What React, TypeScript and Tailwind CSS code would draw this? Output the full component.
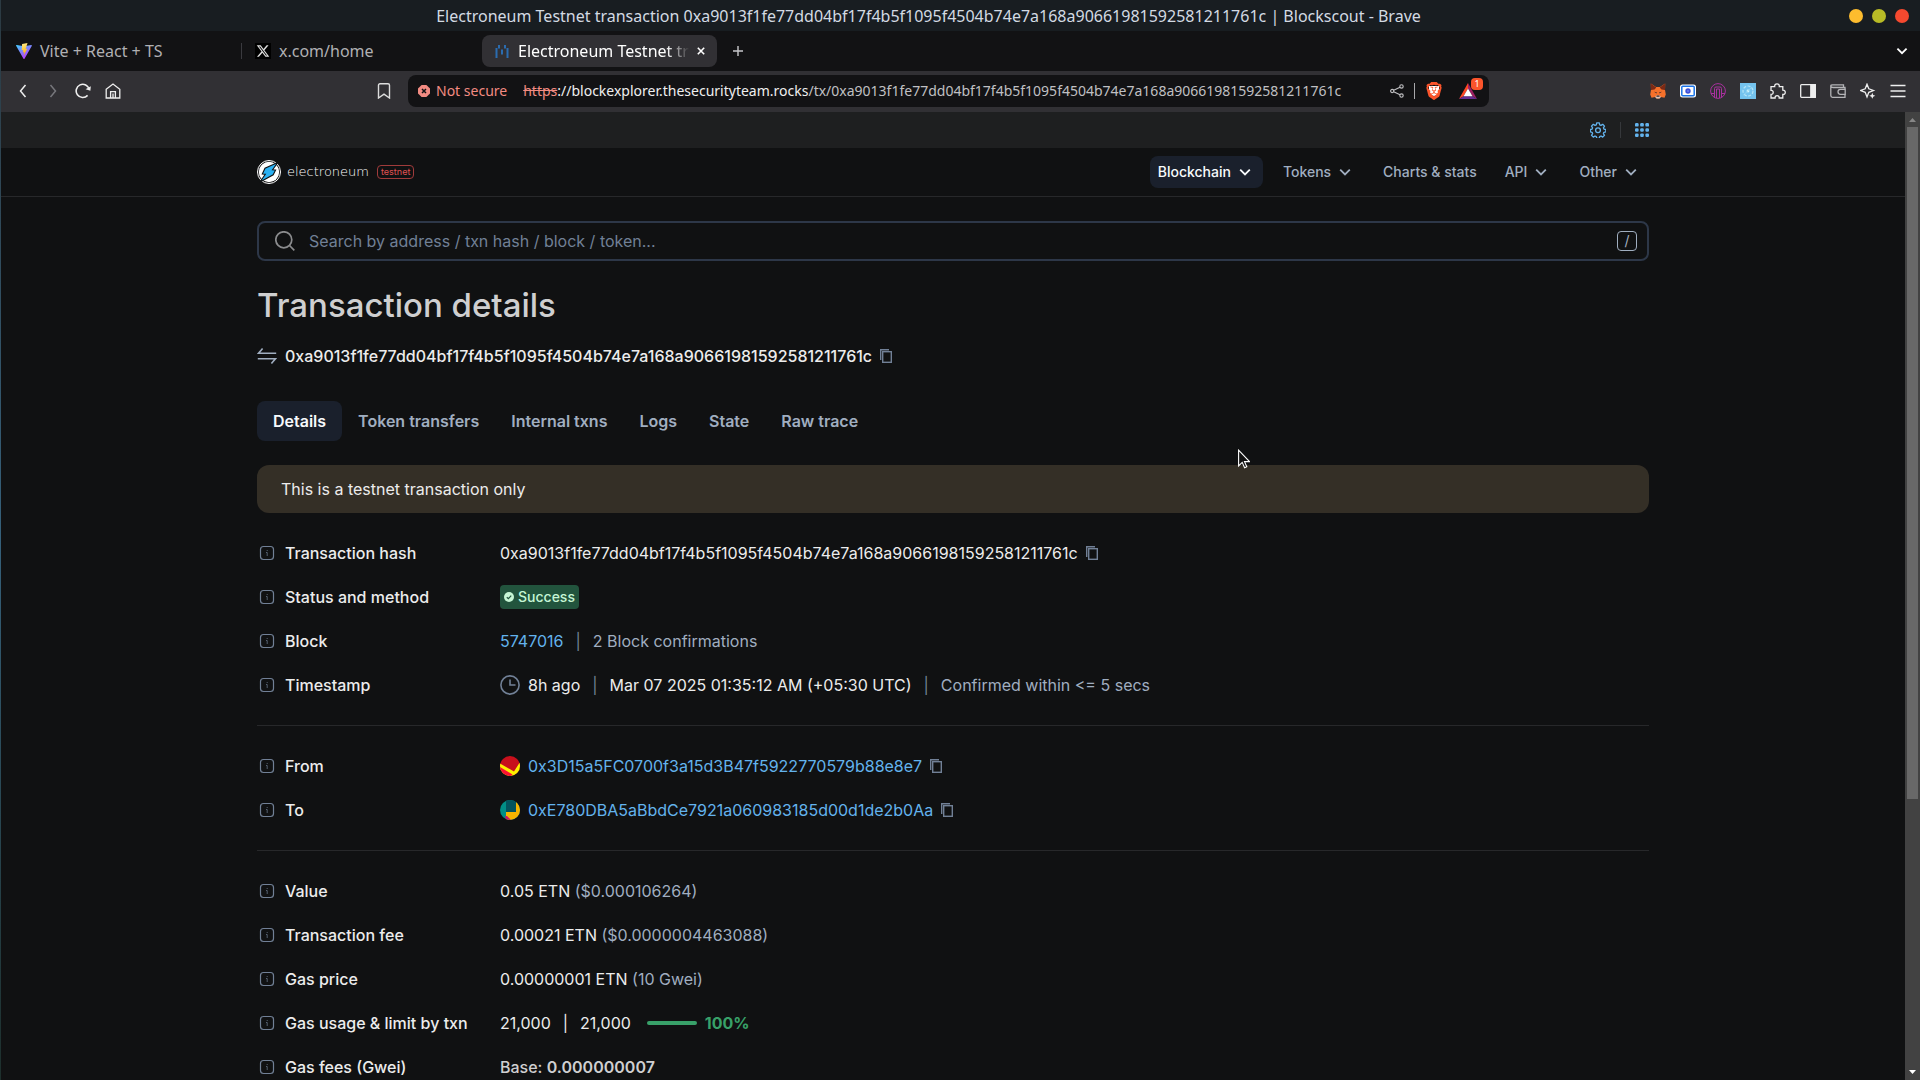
import { type ReactNode, useState } from 'react'
import { FaXTwitter } from 'react-icons/fa6'
import { SiBrave } from 'react-icons/si'

const TX_HASH = '0xa9013f1fe77dd04bf17f4b5f1095f4504b74e7a168a90661981592581211761c'

const NAV = [
    { label: 'Blockchain', menu: true, active: true },
    { label: 'Tokens', menu: true, active: false },
    { label: 'Charts & stats', menu: false, active: false },
    { label: 'API', menu: true, active: false },
    { label: 'Other', menu: true, active: false },
]

const TABS = ['Details', 'Token transfers', 'Internal txns', 'Logs', 'State', 'Raw trace']

export default function App() {
    return (
        <div className="flex h-screen overflow-hidden bg-[#101112] font-['Inter',sans-serif] text-[#ececec]">
            {/* strip of wallpaper beside the window */}
            <div className="w-px shrink-0 bg-linear-to-b from-[#2b3a42] via-[#35607a] to-[#1d2f2c]" />
            <div className="flex min-w-0 flex-1 flex-col">
                <TitleBar />
                <TabStrip />
                <Toolbar />
                <div className="flex min-h-0 flex-1">
                    <div className="min-w-0 flex-1 overflow-hidden">
                        <TopBar />
                        <Header />
                        <TransactionPage />
                    </div>
                    <ScrollBar />
                </div>
            </div>
            <Cursor />
        </div>
    )
}

const TitleBar = () => (
    <div className="relative flex h-[31px] shrink-0 items-center justify-end gap-[9px] bg-[#181d21] pr-[11px] font-['Noto_Sans',sans-serif]">
        <div className="absolute inset-x-0 text-center text-base text-[#d3dae3]">
            <span className="pr-16">Electroneum Testnet transaction {TX_HASH} | Blockscout - Brave</span>
        </div>
        <button aria-label="Minimize" className="relative size-3.5 rounded-full bg-[#fdbc2e]" />
        <button aria-label="Maximize" className="relative size-3.5 rounded-full bg-[#b8bb26]" />
        <button aria-label="Close" className="relative size-3.5 rounded-full bg-[#f5492f]" />
    </div>
)

const TabStrip = () => (
    <div className="flex h-10 shrink-0 items-center bg-[#121214] font-['Noto_Sans',sans-serif] text-base text-[#b0b0b3]">
        <button className="flex w-60 items-center gap-2 pl-[15px]">
            <ViteIcon />
            Vite + React + TS
        </button>
        <div className="h-4 w-px bg-[#3a3a3f]" />
        <button className="flex w-60 items-center gap-2 pl-[13px]">
            <span className="flex size-4 items-center justify-center bg-black">
                <FaXTwitter className="size-3.5 text-[#dddddd]" />
            </span>
            x.com/home
        </button>
        <div className="flex h-8 w-[235px] items-center rounded-lg bg-[#313034] pr-2 pl-3 text-white">
            <BlockscoutIcon />
            <button className="ml-2 min-w-0 flex-1 mask-r-from-85% mask-r-to-98% text-left whitespace-nowrap">
                Electroneum Testnet tr
            </button>
            <button aria-label="Close tab" className="flex size-4 items-center justify-center">
                <svg className="size-2" viewBox="0 0 8 8" stroke="#fff" strokeWidth="1.6"><path d="M.8.8l6.4 6.4M7.2.8L.8 7.2" /></svg>
            </button>
        </div>
        <button aria-label="New tab" className="ml-4">
            <svg className="size-2.5" viewBox="0 0 10 10" stroke="#c8c8cb" strokeWidth="1.4"><path d="M5 0v10M0 5h10" /></svg>
        </button>
        <button aria-label="Search tabs" className="mr-3 ml-auto">
            <svg className="h-3 w-3" viewBox="0 0 12 12" fill="none" stroke="#fff" strokeWidth="1.8"><path d="M1.4 3.6L6 8.2l4.6-4.6" /></svg>
        </button>
    </div>
)

const Toolbar = () => (
    <div className="flex h-[41px] shrink-0 items-center bg-[#313034] px-3.5 pb-px font-['Noto_Sans',sans-serif] text-sm">
        <div className="flex flex-1 items-center gap-3.5">
            <ToolButton label="Back"><path d="M10.5 2L5.5 8l5 6" strokeWidth="1.5" /></ToolButton>
            <ToolButton label="Forward"><path d="M5.5 2l5 6-5 6" stroke="#77777c" strokeWidth="1.5" /></ToolButton>
            <ToolButton label="Reload">
                <path d="M12.6 12.4A6.6 6.6 0 1 1 14.2 6.4" strokeWidth="1.6" />
                <path d="M10.6 6.2l4.8 1.6.4-4.6z" fill="#eee" stroke="none" />
            </ToolButton>
            <ToolButton label="Home">
                <path d="M1.2 6.2L8 1l6.800 5.200V15H1.200z" />
                <path d="M5.600 15V8.600h4.800V15M8 10.400V15" />
            </ToolButton>
            <button aria-label="Bookmark this tab" className="mr-4 ml-auto">
                <svg className="size-4" viewBox="0 0 16 16" fill="none" stroke="#ddd" strokeWidth="1.400"><path d="M2.500 2.200Q2.500.8 4 .8h8q1.500 0 1.500 1.400V15L8 11.200 2.500 15z" /></svg>
            </button>
        </div>
        <div className="flex h-8 min-w-0 shrink basis-[1081px] items-center rounded-lg bg-[#121214] pr-1.5 pl-2.5 whitespace-nowrap">
            <button className="flex items-center gap-1.5 text-[#f28b82]">
                <svg className="size-3" viewBox="0 0 12 12">
                    <path d="M3.600 0h4.800L12 3.600v4.800L8.400 12H3.600L0 8.400V3.600z" fill="#f28b82" />
                    <path d="M4 4l4 4M8 4L4 8" stroke="#121214" strokeWidth="1.500" />
                </svg>
                Not secure
            </button>
            <div className="ml-4 flex-1 text-[#c0c0c3]">
                <span className="text-[#f28b82] line-through">https</span>
                <span className="text-[#efefef]">://blockexplorer.thesecurityteam.rocks</span>
                /tx/{TX_HASH}
            </div>
            <button aria-label="Share">
                <svg className="size-3.5" viewBox="0 0 14 14" fill="none" stroke="#c0c0c3" strokeWidth="1.100">
                    <circle cx="2.200" cy="7" r="1.600" /><circle cx="11.500" cy="2.400" r="1.700" /><circle cx="11.500" cy="11.600" r="1.700" />
                    <path d="M3.700 6.300l6.300-3.100M3.700 7.700l6.300 3.100" />
                </svg>
            </button>
            <div className="mx-2.5 h-4 w-px bg-[#a8a8ab]" />
            <button aria-label="Brave Shields" className="flex size-[18px] items-center justify-center">
                <BraveShield />
            </button>
            <button aria-label="Brave Rewards" className="relative ml-4 flex h-[18px] w-6 items-center">
                <svg className="h-4 w-[18px]" viewBox="0 0 18 16">
                    <path d="M9 0L0 16l4.500-2.800L9 5.500z" fill="#ff4724" />
                    <path d="M9 0l9 16-4.500-2.800L9 5.500z" fill="#9e1f63" />
                    <path d="M0 16h18l-4.500-2.800h-9z" fill="#662d91" />
                    <path d="M9 5.500l4.500 7.700h-9z" fill="#fff" />
                </svg>
                <span className="absolute -top-1 right-0 flex h-3 w-3 items-center justify-center rounded-sm bg-[#fb542b] text-[9px] text-white">1</span>
            </button>
        </div>
        <div className="flex flex-1 items-center justify-end gap-3.5 pl-6">
            <ToolButton label="MetaMask"><FoxArt /></ToolButton>
            <ToolButton label="Screen recorder">
                <rect x="0" y="1.500" width="16" height="13" rx="2.500" fill="#fff" stroke="none" />
                <rect x="1.800" y="3.200" width="12.400" height="9.600" rx="1" stroke="#1a73e8" strokeWidth="1.500" />
                <circle cx="8" cy="8" r="2.700" fill="#3f51d8" stroke="none" />
                <circle cx="8" cy="8" r=".8" fill="#8fa0ff" stroke="none" />
            </ToolButton>
            <ToolButton label="Wallet extension">
                <g stroke="#a9309f" strokeWidth="1">
                    <circle cx="8" cy="8" r="7.400" />
                    <path d="M4.500 14.500V5.500q0-1.500 1.500-1.500h4q1.500 0 1.500 1.500v9M6.500 15V6h3v9M1 10.500h3.500M11.500 10.500H15" />
                </g>
            </ToolButton>
            <ToolButton label="Crystal extension">
                <rect width="16" height="16" fill="#74c3ee" stroke="none" />
                <circle cx="8" cy="8" r="5" stroke="#b5e4f7" strokeWidth="1.200" strokeDasharray="3 1.500" />
                <circle cx="8" cy="8" r="1.400" fill="#d4f5fb" stroke="none" />
                <path d="M3.500 12L12 4" stroke="#9ad8f4" strokeWidth=".8" />
            </ToolButton>
            <ToolButton label="Extensions">
                <path d="M1 3.600h3.700C4.500 1.800 5.600.8 7 .8s2.500 1 2.300 2.800h3.500v3.500c1.600-.1 2.500.9 2.500 2.200s-.9 2.300-2.500 2.200V15H9.200c.1-1.500-.8-2.300-2.100-2.300S5 13.500 5.100 15H1v-3.600c1.500.1 2.200-.8 2.200-2S2.500 7.300 1 7.400z" />
            </ToolButton>
            <ToolButton label="Sidebar">
                <rect x=".7" y="1.700" width="14.600" height="12.600" rx=".8" />
                <path d="M10.800 1.700h4.500v12.600h-4.500z" fill="#eee" />
            </ToolButton>
            <ToolButton label="Wallet">
                <g stroke="#b4b4b7">
                    <path d="M15 6.300V4.500H3Q.8 4.300.8 3V12.500Q.8 14.300 2.500 14.300H15v-3M.8 3Q.8 1.800 2.500 1.800H13.500V4.500" />
                    <path d="M15.200 6.300H10.500a2.500 2.500 0 0 0 0 5h4.700z" />
                </g>
            </ToolButton>
            <ToolButton label="Leo AI">
                <path d="M7 1.200L8.800 5.800 13.500 7.500 8.800 9.300 7 14 5.200 9.300.7 7.500l4.500-1.700z" />
                <path d="M12.300 9.800l.9 2.100 2.100.9-2.100.9-.9 2.100-.9-2.100-2.100-.9 2.100-.9z" fill="#eee" stroke="none" />
            </ToolButton>
            <ToolButton label="Menu"><path d="M.5 2.500h15M.5 8h15M.5 13.500h15" /></ToolButton>
        </div>
    </div>
)

const ToolButton = ({ label, children }: { label: string, children: ReactNode }) => (
    <button aria-label={label} className="shrink-0">
        <svg className="size-4" viewBox="0 0 16 16" fill="none" stroke="#eeeeee" strokeWidth="1.300">{children}</svg>
    </button>
)

const TopBar = () => (
    <div className="h-9 bg-[#1e1f20]">
        <div className="mx-auto flex h-full max-w-[1440px] items-center justify-end px-6">
            <button aria-label="Settings">
                <svg className="size-4" viewBox="0 0 16 16" fill="none" stroke="#63b3ed" strokeWidth="1.300">
                    <path d="M6.700.9h2.600l.4 1.900 1.300.6 1.700-1.100 1.800 1.800-1.100 1.700.5 1.300 1.900.4v2.300l-1.900.5-.5 1.300 1.100 1.700-1.800 1.800-1.700-1.100-1.300.6-.4 1.900H6.700l-.4-1.900-1.300-.6-1.700 1.100-1.800-1.800 1.100-1.700-.5-1.300L.4 9.800V7.500l1.700-.4.5-1.300L1.500 4.100l1.800-1.800L5 3.400l1.300-.6z" strokeLinejoin="round" />
                    <circle cx="8" cy="8.300" r="2.400" />
                </svg>
            </button>
            <div className="mx-3.5 h-4 w-px bg-[#36383b]" />
            <button aria-label="Apps">
                <svg className="size-3.5" viewBox="0 0 14 14" fill="#63b3ed">
                    {[0, 1, 2, 3, 4, 5, 6, 7, 8].map((i) => (
                        <rect key={i} x={(i % 3) * 5.200} y={Math.floor(i / 3) * 5.200} width="3.600" height="3.600" rx="1.200" />
                    ))}
                </svg>
            </button>
        </div>
    </div>
)

const Header = () => (
    <header className="border-b border-[#27282a]">
        <div className="mx-auto flex h-12 max-w-[1440px] items-center px-6">
            <a href="#" className="flex items-center gap-1.5">
                <ElectroneumIcon />
                <span className="font-['DejaVu_Sans',sans-serif] text-[13px] font-extralight text-white">electroneum</span>
            </a>
            <span className="ml-2 flex h-3.5 items-center rounded-sm border border-[#a03b3b] px-[3px] text-[9px] text-[#e05252]">testnet</span>
            <nav className="ml-auto flex gap-3">
                {NAV.map((item) => (
                    <button
                        key={item.label}
                        className={`flex h-8 items-center gap-1 rounded-lg px-2 text-sm font-medium ${item.active ? 'bg-[#1a202c] text-[#f7fafc]' : 'text-[#a0aec0]'}`}
                    >
                        {item.label}
                        {item.menu && (
                            <svg className="size-5" viewBox="0 0 20 20" fill="none" stroke="currentColor" strokeWidth="1.800"><path d="M5.200 7.600L10 12.400l4.800-4.800" /></svg>
                        )}
                    </button>
                ))}
            </nav>
        </div>
    </header>
)

const TransactionPage = () => {
    const [tab, setTab] = useState('Details')

    return (
        <main className="mx-auto max-w-[1440px] px-6 pt-6">
            <form className="flex h-10 items-center rounded-lg border-2 border-[#2d3748] pr-2.5 pl-4" onSubmit={(e) => e.preventDefault()}>
                <svg className="size-5" viewBox="0 0 20 20" fill="none" stroke="#8b8c8e" strokeWidth="1.700">
                    <circle cx="8.800" cy="8.800" r="8" /><path d="M14.500 14.500l4.800 4.800" />
                </svg>
                <input
                    aria-label="Search"
                    className="ml-3.5 flex-1 bg-transparent text-base outline-none placeholder:text-[#718096]"
                    placeholder="Search by address / txn hash / block / token..."
                />
                <kbd className="flex size-5 items-center justify-center rounded-sm border border-[#a0aec0] font-['Inter',sans-serif] text-sm text-[#a0aec0]">/</kbd>
            </form>

            <h1 className="mt-6 text-[33px] leading-10 font-medium text-[#cfcfd0]">Transaction details</h1>

            <div className="mt-4 flex items-center text-base leading-[30px] font-medium">
                <svg className="mr-2 size-5" viewBox="0 0 20 20" fill="none" stroke="#a0aec0" strokeWidth="1.600">
                    <path d="M19.200 7.200H1.600L5.600 2.400M.8 12.800h17.600l-4 4.800" />
                </svg>
                {TX_HASH}
                <CopyButton />
            </div>

            <div role="tablist" className="mt-[30px] flex">
                {TABS.map((name) => (
                    <button
                        key={name}
                        role="tab"
                        aria-selected={tab === name}
                        onClick={() => setTab(name)}
                        className={`h-10 rounded-lg px-4 text-base font-semibold ${tab === name ? 'bg-[#1a202c] text-[#f7fafc]' : 'text-[#a0aec0]'}`}
                    >
                        {name}
                    </button>
                ))}
            </div>

            <div className="mt-6 rounded-xl bg-[#342f26] px-6 py-3 text-base">This is a testnet transaction only</div>

            <dl className="mt-[26px] flex flex-col gap-4 text-base">
                <Row label="Transaction hash">
                    {TX_HASH}
                    <CopyButton />
                </Row>
                <Row label="Status and method">
                    <span className="flex h-6 items-center gap-1 rounded-sm bg-[#22543d] px-1 text-sm font-medium text-[#c6f6d5]">
                        <svg className="size-2.5" viewBox="0 0 10 10">
                            <circle cx="5" cy="5" r="5" fill="#c6f6d5" />
                            <path d="M2.800 5.200l1.600 1.500L7.200 3.600" fill="none" stroke="#22543d" strokeWidth="1.200" />
                        </svg>
                        Success
                    </span>
                </Row>
                <Row label="Block">
                    <a href="#" className="text-[#63b3ed]">5747016</a>
                    <Separator />
                    <span className="text-[#a0aec0]">2 Block confirmations</span>
                </Row>
                <Row label="Timestamp">
                    <svg className="mr-2 size-5" viewBox="0 0 20 20" fill="none" stroke="#718096" strokeWidth="1.600">
                        <circle cx="10" cy="10" r="9.100" /><path d="M10 4.500V10h5.500" />
                    </svg>
                    8h ago
                    <Separator />
                    Mar 07 2025 01:35:12 AM (+05:30 UTC)
                    <Separator />
                    <span className="text-[#a0aec0]">Confirmed within &lt;= 5 secs</span>
                </Row>
                <Divider />
                <Row label="From">
                    <svg className="mr-2 size-5 rounded-full" viewBox="0 0 20 20">
                        <rect width="20" height="20" fill="#c8101c" />
                        <path d="M0 7.500l14 8L20 6v14H0z" fill="#fcf000" />
                        <path d="M0 11l12.500 7.500L11 20H0z" fill="#fb1232" />
                        <path d="M20 13l-4 7h4z" fill="#f5a400" />
                    </svg>
                    <a href="#" className="text-[#63b3ed]">0x3D15a5FC0700f3a15d3B47f5922770579b88e8e7</a>
                    <CopyButton />
                </Row>
                <Row label="To">
                    <svg className="mr-2 size-5 rounded-full" viewBox="0 0 20 20">
                        <rect width="20" height="20" fill="#018e86" />
                        <path d="M6 12h10V0h4v20H6z" fill="#f7b500" />
                        <path d="M6 0h10v12H6z" fill="#03545e" />
                        <path d="M5 16l2 0 4 4H6z" fill="#c8146c" />
                    </svg>
                    <a href="#" className="text-[#63b3ed]">0xE780DBA5aBbdCe7921a060983185d00d1de2b0Aa</a>
                    <CopyButton />
                </Row>
                <Divider />
                <Row label="Value"><Amount value="0.05 ETN" note="($0.000106264)" /></Row>
                <Row label="Transaction fee"><Amount value="0.00021 ETN" note="($0.0000004463088)" /></Row>
                <Row label="Gas price"><Amount value="0.00000001 ETN" note="(10 Gwei)" /></Row>
                <Row label="Gas usage & limit by txn">
                    21,000
                    <span className="mx-3">|</span>
                    21,000
                    <div className="mr-2 ml-4 h-1 w-[50px] rounded-full bg-[#38a169]" />
                    <span className="font-bold text-[#38a169]">100%</span>
                </Row>
                <Row label="Gas fees (Gwei)">
                    <span className="font-medium text-[#cfcfd0]">Base: <span className="font-semibold">0.000000007</span></span>
                </Row>
            </dl>
        </main>
    )
}

const Row = ({ label, children }: { label: string, children: ReactNode }) => (
    <div className="flex h-7 shrink-0 items-center gap-6">
        <dt className="flex w-[219px] items-center gap-2 font-medium">
            <svg className="size-5" viewBox="0 0 20 20" fill="none" stroke="#718096">
                <rect x="3.500" y="3.500" width="13" height="13" rx="3" strokeWidth="1.200" />
                <path d="M9 9.500h1.200v3.500M10.200 7v1" opacity=".7" />
            </svg>
            {label}
        </dt>
        <dd className="flex items-center whitespace-nowrap">{children}</dd>
    </div>
)

const Amount = ({ value, note }: { value: string, note: string }) => (
    <span>{value} <span className="text-[#a0aec0]">{note}</span></span>
)

const Separator = () => <span className="mx-3 text-[#718096]">|</span>

const Divider = () => <div role="separator" className="my-2.5 h-px shrink-0 bg-[#27282a]" />

const CopyButton = () => (
    <button aria-label="Copy" className="ml-1">
        <svg className="size-5" viewBox="0 0 20 20" fill="none" stroke="#718096" strokeWidth="1.400">
            <path d="M4.700 14V3.700H13" /><rect x="6.700" y="5.700" width="8.600" height="10.600" />
        </svg>
    </button>
)

const ScrollBar = () => (
    <div className="flex w-[15px] shrink-0 flex-col items-center bg-[#424242]">
        <svg className="h-[15px] w-[15px] shrink-0" viewBox="0 0 15 15"><path d="M4 10l3.500-4 3.500 4z" fill="#868686" /></svg>
        <div className="h-[69.4%] w-[11px] bg-[#686868]" />
        <svg className="mt-auto h-[15px] w-[15px] shrink-0" viewBox="0 0 15 15"><path d="M4 5l3.500 4L11 5z" fill="#fff" /></svg>
    </div>
)

const Cursor = () => (
    <svg className="pointer-events-none absolute top-[449px] left-[1238px] h-5 w-3" viewBox="0 0 12 20">
        <path d="M.6 1.200V17l3.600-3.600 2.400 5.400 2.200-1-2.300-5.200h5z" fill="#111" stroke="#fff" strokeWidth="1.100" />
    </svg>
)

const ViteIcon = () => (
    <svg className="size-4" viewBox="0 0 32 32">
        <defs>
            <linearGradient id="vite-a" x1="0" y1="0" x2=".6" y2="1"><stop stopColor="#41d1ff" /><stop offset="1" stopColor="#bd34fe" /></linearGradient>
            <linearGradient id="vite-b" x1=".4" y1="0" x2=".6" y2="1"><stop stopColor="#ffea83" /><stop offset="1" stopColor="#ffa800" /></linearGradient>
        </defs>
        <path d="M31.800 5.300L17 31.400q-1 1.200-2 0L.2 5.300Q-.2 3.600 1.600 3.800L16 6.400l14.500-2.600q1.700 0 1.300 1.500z" fill="url(#vite-a)" />
        <path d="M23 0L12.200 2.200l-.8 12.300 3.200-.7-1 5 3-1-1.500 7.500 7.500-13.800-3.300.7z" fill="url(#vite-b)" />
    </svg>
)

const BlockscoutIcon = () => (
    <svg className="size-4" viewBox="0 0 16 16" fill="none" stroke="#2b6cb0" strokeWidth="2">
        <path d="M2.500 5v10M5 2v3.500M8 6.500v5M11 2v3.500M13.500 5v10" />
    </svg>
)

// the icon's lion is cut out of the shield, so a white plate goes behind it
const BraveShield = () => (
    <span className="relative flex">
        <span className="absolute inset-1 rounded-b-full bg-white" />
        <SiBrave className="relative size-[18px] text-[#fb542b]" />
    </span>
)

const FoxArt = () => (
    <g stroke="none">
        <path d="M.8.6L6 4h4L15.200.6 15 7l.8 4.500-1.300 3.200-3.700-.6-1.300 1.500h-3l-1.300-1.500-3.700.6L.2 11.500 1 7z" fill="#f6712b" />
        <path d="M.8.6L6.300 4.600 4.500 6.500 1 7zM15.200.6L9.700 4.600l1.800 1.900 3.500.5z" fill="#7a2a16" />
        <path d="M4 8.800l2.600.5.200 1.300zM12 8.800l-2.600.5-.2 1.300z" fill="#33272c" />
        <path d="M5.200 14.100l1-1.600h3.600l1 1.600-1.300 1.500h-3z" fill="#dcc3b8" />
        <path d="M6.600 12.500h2.800l.2 1.300H6.400z" fill="#33272c" />
    </g>
)

const ElectroneumIcon = () => (
    <svg className="size-6" viewBox="0 0 24 24">
        <circle cx="12" cy="12" r="11.500" fill="#101112" stroke="#fff" />
        <circle cx="12" cy="12" r="10.200" fill="#fff" />
        <path d="M20.800 2.600L8 8.200 5.300 14l3 .2L3 22l13.200-7.200L18.600 10l-3-.2z" fill="#2ab1f3" stroke="#101112" strokeWidth="1.100" />
    </svg>
)
